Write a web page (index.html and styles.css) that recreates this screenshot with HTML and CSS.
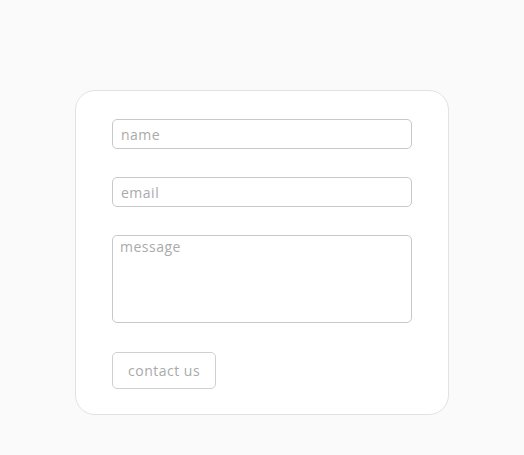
FILE: index.html
```html
<!DOCTYPE html>
<html lang="en">
<head>
    <meta charset="UTF-8">
    <meta name="viewport" content="width=device-width, initial-scale=1.0">
    <title>Contact</title>
    <link rel="stylesheet" href="styles.css">
</head>
<body>

<div class="card">
    <form class="contact-form">
        <input type="text" class="field" placeholder="name">
        <input type="text" class="field" placeholder="email">
        <textarea class="field message" placeholder="message"></textarea>
        <div class="actions">
            <button type="submit">contact us</button>
        </div>
    </form>
</div>

</body>
</html>
```

FILE: styles.css
```css
body {
    font-family: "Open Sans", sans-serif;
    background-color: #fafafa;
    margin: 0;
    padding-top: 90px;
}
.card {
    width: 374px;
    margin: 0 auto;
    box-sizing: border-box;
    background: white;
    border: 1px solid #e2e2e2;
    border-radius: 20px;
    padding: 28px 36px 25px;
}
.contact-form {
    display: flex;
    flex-direction: column;
    gap: 28px;
}
.field {
    display: block;
    width: 100%;
    height: 30px;
    padding: 0 8px;
    border: 1px solid #c8c8c8;
    border-radius: 5px;
    box-sizing: border-box;
    font-family: inherit;
    font-size: 14px;
    letter-spacing: 0.5px;
    color: #555;
    outline: none;
}
.field::placeholder {
    color: #aaa;
}
.message {
    height: 88px;
    padding: 1px 7px;
    resize: none;
}
.actions {
    padding-top: 1px;
}
button {
    background: white;
    color: #aaa;
    border: 1px solid #d0d0d0;
    border-radius: 5px;
    height: 37px;
    padding: 0 15px;
    font-family: inherit;
    font-size: 14px;
    letter-spacing: 0.5px;
    cursor: pointer;
}
```
